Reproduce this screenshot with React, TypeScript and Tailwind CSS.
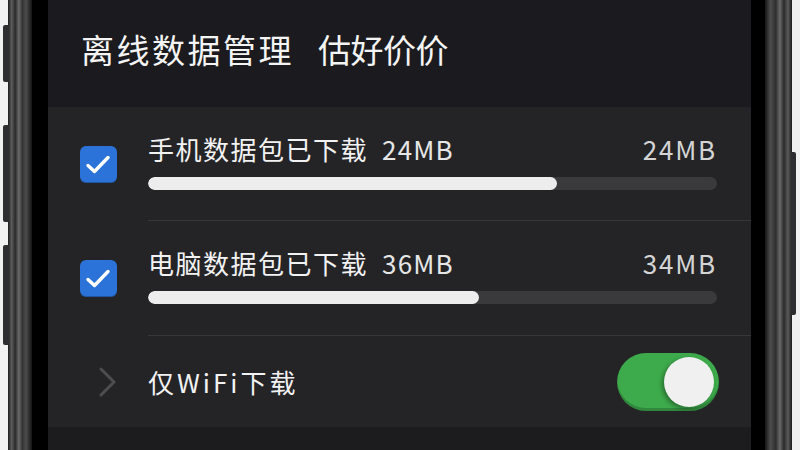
import React from "react";

const font = { fontFamily: '"Noto Sans CJK SC", "Noto Sans", sans-serif' };

function Check() {
  return (
    <div className="w-[37px] h-[37px] rounded-[6px] bg-[#2b73d8] flex items-center justify-center shadow-[inset_0_-1px_0_rgba(0,0,0,0.25)]">
      <svg width="37" height="37" viewBox="0 0 37 37" fill="none">
        <path d="M8 19.5 L14.5 25.5 L28 11.5" stroke="white" strokeWidth="3.4" strokeLinecap="round" strokeLinejoin="round" />
      </svg>
    </div>
  );
}

function DataRow({ label, size, total, pct, pt }: { label: string; size: string; total: string; pct: number; pt: string }) {
  return (
    <div className="flex items-stretch">
      <div className="w-[100px] pl-[32px] flex items-center">
        <Check />
      </div>
      <div className={`flex-1 pr-[34px] border-b border-[#37373a] ${pt}`}>
        <div className="flex items-center justify-between h-[30px] text-[26px] leading-[30px]">
          <span className="text-[#f2f2f2] tracking-[1.5px]">
            {label}
            <span className="ml-[14px] text-[#e6e6e6] tracking-[1.2px]">{size}</span>
          </span>
          <span className="text-[#d4d4d4] tracking-[1.8px]">{total}</span>
        </div>
        <div className="mt-[13px] h-[13px] rounded-full bg-[#3a3a3d] overflow-hidden">
          <div className="h-full rounded-full bg-[#ededed]" style={{ width: `${pct}%` }} />
        </div>
      </div>
    </div>
  );
}

export default function App() {
  return (
    <div className="w-[800px] h-[450px] overflow-hidden flex bg-[#f1f1f1] relative" style={font}>
      {/* left side buttons */}
      <div className="absolute left-[3px] top-[25px] w-[6px] h-[57px] rounded-l-[2px] bg-[#2e2e30]" />
      <div className="absolute left-[3px] top-[125px] w-[6px] h-[97px] rounded-l-[2px] bg-[#2e2e30]" />
      <div className="absolute left-[3px] top-[245px] w-[6px] h-[100px] rounded-l-[2px] bg-[#2e2e30]" />
      {/* right side button */}
      <div className="absolute left-[791px] top-[152px] w-[5px] h-[163px] rounded-r-[2px] bg-[#2e2e30]" />

      <div className="w-[8px] shrink-0" />
      {/* left metal frame */}
      <div className="w-[24px] shrink-0 bg-[linear-gradient(to_right,#1c1c1c,#5c5c5c_15%,#2a2a2a_30%,#6a6a6a_45%,#333_60%,#4d4d4d_75%,#141414)]" />
      <div className="w-[16px] shrink-0 bg-black" />

      {/* screen */}
      <div className="flex-1 flex flex-col bg-[#1d1d20]">
        <div className="h-[107px] shrink-0 bg-[#1b1b1f] pl-[33px] pt-[26px]">
          <div className="text-[33px] leading-[46px] text-[#f4f4f4] tracking-[2.5px]">
            离线数据管理<span className="ml-[24px] tracking-[-0.5px]">估好价价</span>
          </div>
        </div>
        <div className="h-[320px] shrink-0 bg-[#242427] flex flex-col">
          <DataRow label="手机数据包已下载" size="24MB" total="24MB" pct={71.8} pt="pt-[27px] h-[114px]" />
          <DataRow label="电脑数据包已下载" size="36MB" total="34MB" pct={58.1} pt="pt-[27px] h-[115px]" />
          <div className="flex-1 flex items-center">
            <div className="w-[100px] pl-[50px] flex items-center">
              <svg width="20" height="30" viewBox="0 0 20 30" fill="none">
                <path d="M3 2 L16 15 L3 28" stroke="#4d4d50" strokeWidth="3" strokeLinecap="round" strokeLinejoin="round" />
              </svg>
            </div>
            <div className="flex-1 pr-[32px] flex items-center justify-between">
              <span className="text-[26px] leading-[30px] text-[#f2f2f2] tracking-[3px]">仅WiFi下载</span>
              <div className="w-[102px] h-[58px] rounded-full bg-[#3daa4b] shadow-[inset_0_-3px_0_rgba(0,0,0,0.2)] flex items-center justify-end pr-[5px]">
                <div className="w-[50px] h-[50px] rounded-full bg-[#f0f0f0] shadow-[-2px_2px_4px_rgba(0,0,0,0.35)]" />
              </div>
            </div>
          </div>
        </div>
        <div className="flex-1 bg-[#1c1c1e]" />
      </div>

      {/* right frame */}
      <div className="w-[14px] shrink-0 bg-black" />
      <div className="w-[27px] shrink-0 bg-[linear-gradient(to_right,#141414,#4d4d4d_20%,#2e2e2e_40%,#6a6a6a_55%,#2a2a2a_70%,#5a5a5a_85%,#1c1c1c)]" />
      <div className="w-[8px] shrink-0" />
    </div>
  );
}
